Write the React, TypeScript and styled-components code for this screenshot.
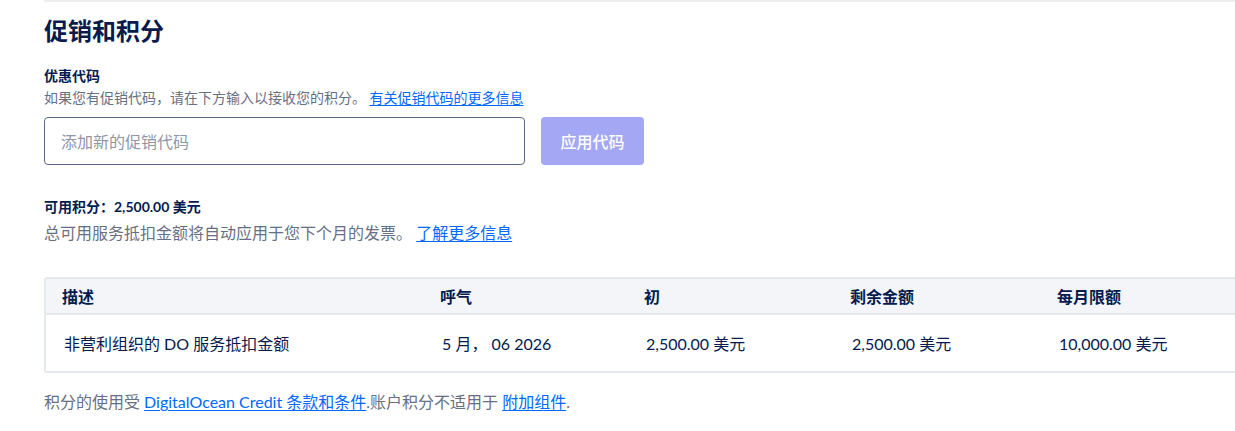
import styled, { createGlobalStyle } from "styled-components";

const GlobalStyle = createGlobalStyle`
  html, body {
    margin: 0;
    padding: 0;
    overflow: hidden;
    background: #ffffff;
  }
  body {
    font-family: Lato, "Noto Sans CJK SC", sans-serif;
    color: #031b4e;
  }
`;

const columns = [
  { title: "描述", width: 378 },
  { title: "呼气", width: 204 },
  { title: "初", width: 206 },
  { title: "剩余金额", width: 207 },
  { title: "每月限额", width: 205 },
];

const rows = [
  ["非营利组织的 DO 服务抵扣金额", "5 月， 06 2026", "2,500.00 美元", "2,500.00 美元", "10,000.00 美元"],
];

const gridCols = columns.map((c) => `${c.width}px`).join(" ");

const App = () => {
  return (
    <>
      <GlobalStyle />
      <Page>
        <Section>
          <Title>促销和积分</Title>

          <Label>优惠代码</Label>
          <Help>
            如果您有促销代码，请在下方输入以接收您的积分。{" "}
            <Link href="#">有关促销代码的更多信息</Link>
          </Help>

          <PromoRow>
            <PromoInput placeholder="添加新的促销代码" />
            <ApplyButton disabled>应用代码</ApplyButton>
          </PromoRow>

          <Label mt="32px">可用积分：2,500.00 美元</Label>
          <Body>
            总可用服务抵扣金额将自动应用于您下个月的发票。{" "}
            <Link href="#">了解更多信息</Link>
          </Body>

          <Table>
            <HeadRow>
              {columns.map((c) => (
                <HeadCell key={c.title}>{c.title}</HeadCell>
              ))}
            </HeadRow>
            {rows.map((r, i) => (
              <BodyRow key={i}>
                {r.map((v, j) => (
                  <Cell key={j}>{v}</Cell>
                ))}
              </BodyRow>
            ))}
          </Table>

          <Footnote>
            积分的使用受 <Link href="#">DigitalOcean Credit 条款和条件</Link>
            .账户积分不适用于 <Link href="#">附加组件</Link>.
          </Footnote>
        </Section>
      </Page>
    </>
  );
};

export default App;

const Page = styled.div`
  padding-left: 44px;
  width: 1300px;
`;

const Section = styled.section`
  border-top: 2px solid #eeeeee;
  padding-top: 13px;
`;

const Title = styled.h1`
  margin: 0;
  font-size: 24px;
  line-height: 32px;
  font-weight: 700;
  color: #0b1a4b;
`;

const Label = styled.div<{ mt?: string }>`
  margin-top: ${(p) => p.mt || "19px"};
  font-size: 14px;
  line-height: 20px;
  font-weight: 700;
  color: #031b4e;
`;

const Help = styled.div`
  margin-top: 2px;
  font-size: 14px;
  line-height: 20px;
  color: #676f83;
`;

const Link = styled.a`
  color: #0069ff;
  text-decoration: underline;
  text-underline-offset: 2px;
`;

const PromoRow = styled.div`
  display: flex;
  gap: 16px;
  margin-top: 9px;
`;

const PromoInput = styled.input`
  box-sizing: border-box;
  width: 481px;
  height: 48px;
  padding: 0 16px;
  border: 1px solid #5b6987;
  border-radius: 4px;
  font-family: Lato, "Noto Sans CJK SC", sans-serif;
  font-size: 16px;
  color: #031b4e;
  outline: none;

  &::placeholder {
    color: #8f96a8;
  }
`;

const ApplyButton = styled.button`
  box-sizing: border-box;
  width: 103px;
  height: 48px;
  border: none;
  border-radius: 4px;
  background: #a4a8f4;
  color: #ffffff;
  font-family: Lato, "Noto Sans CJK SC", sans-serif;
  font-size: 16px;
  font-weight: 500;
`;

const Body = styled.div`
  margin-top: 4px;
  font-size: 16px;
  line-height: 24px;
  color: #676f83;
`;

const Table = styled.div`
  margin-top: 32px;
  width: max-content;
  border: 2px solid #e5e8ed;
  border-radius: 3px;
`;

const HeadRow = styled.div`
  display: grid;
  grid-template-columns: ${gridCols};
  height: 34px;
  align-items: center;
  background: #f3f5f9;
  border-bottom: 2px solid #e5e8ed;
`;

const HeadCell = styled.div`
  padding-left: 16px;
  font-size: 16px;
  font-weight: 700;
  color: #031b4e;
`;

const BodyRow = styled.div`
  display: grid;
  grid-template-columns: ${gridCols};
  height: 56px;
  align-items: center;
`;

const Cell = styled.div`
  padding-left: 18px;
  font-size: 16px;
  color: #031b4e;
`;

const Footnote = styled.div`
  margin-top: 17px;
  font-size: 16px;
  line-height: 24px;
  color: #676f83;
`;
